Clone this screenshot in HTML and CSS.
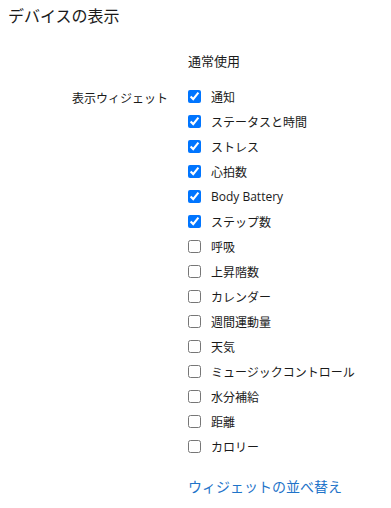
FILE: index.html
```html
<!DOCTYPE html>
<html lang="ja">
<head>
<meta charset="utf-8">
<title>デバイスの表示</title>
<link rel="stylesheet" href="styles.css">
</head>
<body>
<div class="page">
  <h1 class="title">デバイスの表示</h1>
  <div class="settings">
    <div class="col-head">通常使用</div>
    <div class="field-label">表示ウィジェット</div>
    <ul class="widget-list">
      <li class="widget"><input type="checkbox" checked><span>通知</span></li>
      <li class="widget"><input type="checkbox" checked><span>ステータスと時間</span></li>
      <li class="widget"><input type="checkbox" checked><span>ストレス</span></li>
      <li class="widget"><input type="checkbox" checked><span>心拍数</span></li>
      <li class="widget"><input type="checkbox" checked><span>Body Battery</span></li>
      <li class="widget"><input type="checkbox" checked><span>ステップ数</span></li>
      <li class="widget"><input type="checkbox"><span>呼吸</span></li>
      <li class="widget"><input type="checkbox"><span>上昇階数</span></li>
      <li class="widget"><input type="checkbox"><span>カレンダー</span></li>
      <li class="widget"><input type="checkbox"><span>週間運動量</span></li>
      <li class="widget"><input type="checkbox"><span>天気</span></li>
      <li class="widget"><input type="checkbox"><span>ミュージックコントロール</span></li>
      <li class="widget"><input type="checkbox"><span>水分補給</span></li>
      <li class="widget"><input type="checkbox"><span>距離</span></li>
      <li class="widget"><input type="checkbox"><span>カロリー</span></li>
    </ul>
    <a class="reorder" href="#">ウィジェットの並べ替え</a>
  </div>
</div>
</body>
</html>
```
FILE: styles.css
```css
html, body {
  margin: 0;
  padding: 0;
  background: #ffffff;
}
body {
  font-family: "Open Sans", "Noto Sans CJK JP", sans-serif;
  font-weight: 400;
  color: #1a1a1a;
}
.page {
  padding: 6px 8px 0 8px;
}
.title {
  margin: 0;
  font-size: 16px;
  line-height: 20px;
  font-weight: 400;
  color: #1a1a1a;
}
.settings {
  display: grid;
  grid-template-columns: 160px 1fr;
  column-gap: 20px;
  margin-top: 25px;
}
.col-head {
  grid-column: 2;
  font-size: 13px;
  line-height: 20px;
  margin-bottom: 13px;
}
.field-label {
  grid-column: 1;
  text-align: right;
  font-size: 12px;
  line-height: 25px;
  padding-top: 2px;
}
.widget-list {
  grid-column: 2;
  list-style: none;
  margin: 0;
  padding: 0;
}
.widget {
  display: flex;
  align-items: center;
  height: 25px;
  font-size: 12px;
}
.widget input {
  margin: 0 10px 0 0;
  width: 13px;
  height: 13px;
  flex: none;
}
.reorder {
  grid-column: 2;
  margin-top: 18px;
  font-size: 14px;
  line-height: 20px;
  color: #1f74c9;
  text-decoration: none;
}
```
